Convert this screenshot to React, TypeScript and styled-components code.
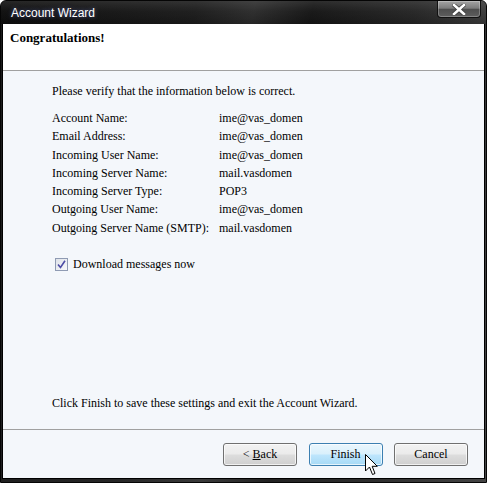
import React from "react";
import styled, { createGlobalStyle } from "styled-components";

const GlobalStyle = createGlobalStyle`
  html, body { margin: 0; padding: 0; background: #ffffff; }
  body { font-family: "Liberation Serif", "Times New Roman", serif; }
`;

const Window = styled.div`
  position: relative;
  width: 487px;
  height: 483px;
  box-sizing: border-box;
  border: 1px solid #050505;
  border-radius: 6px 6px 0 0;
  overflow: hidden;
  display: flex;
  flex-direction: column;
  background: linear-gradient(100deg, #1a1a1a 0%, #262626 35%, #3a3a3a 50%, #222 62%, #2e2e2e 80%, #444 100%);
`;

const TitleBar = styled.div`
  height: 23px;
  flex: none;
  display: flex;
  align-items: flex-start;
  padding-left: 10px;
  padding-right: 5px;
  background:
    linear-gradient(180deg, rgba(255,255,255,0.10) 0%, rgba(255,255,255,0.02) 45%, rgba(0,0,0,0.15) 100%),
    linear-gradient(100deg, #0e0e0e 0%, #1c1c1c 40%, #2c2c2c 52%, #161616 64%, #262626 85%, #3c3c3c 100%);
`;

const Title = styled.span`
  font-family: "Liberation Sans", Arial, sans-serif;
  font-size: 12px;
  line-height: 24px;
  color: #ffffff;
  text-shadow: 0 0 4px rgba(130, 150, 255, 0.55);
`;

const CloseButton = styled.div`
  margin-left: auto;
  width: 44px;
  height: 17px;
  box-sizing: border-box;
  border: 1px solid #111;
  border-top: none;
  border-radius: 0 0 4px 4px;
  display: flex;
  align-items: center;
  justify-content: center;
  background: linear-gradient(180deg, #a4a4a4 0%, #7c7c7c 45%, #4e4e4e 52%, #5e5e5e 100%);
  box-shadow: inset 0 0 0 1px rgba(255,255,255,0.25);
`;

const Frame = styled.div`
  flex: 1;
  display: flex;
  padding: 0 1px 3px 1px;
  min-height: 0;
`;

const Client = styled.div`
  flex: 1;
  display: flex;
  flex-direction: column;
  border: 1px solid #000;
  border-top: none;
  background: #f4f7fb;
`;

const Header = styled.div`
  height: 47px;
  flex: none;
  box-sizing: border-box;
  background: #ffffff;
  border-bottom: 1px solid #a0a0a0;
  padding: 6px 7px 0;
`;

const Heading = styled.div`
  font-size: 13px;
  line-height: 16px;
  font-weight: bold;
  color: #000;
`;

const Main = styled.div`
  flex: 1;
  display: flex;
  flex-direction: column;
  padding: 11px 20px 17px 49px;
  font-size: 12px;
  color: #000;
`;

const Text = styled.div`
  line-height: 18px;
`;

const InfoGrid = styled.div`
  margin-top: 9px;
  display: grid;
  grid-template-columns: 167px 1fr;
  line-height: 18.3px;
`;

const CheckRow = styled.label`
  margin-top: 18px;
  margin-left: 3px;
  display: flex;
  align-items: center;
  gap: 5px;
  line-height: 18px;
`;

const Box = styled.span`
  width: 13px;
  height: 13px;
  box-sizing: border-box;
  border: 1px solid #8f9bb3;
  background: linear-gradient(135deg, #dfe3ea 0%, #f7f8fa 100%);
  display: flex;
  align-items: center;
  justify-content: center;
`;

const FooterText = styled(Text)`
  margin-top: auto;
`;

const Footer = styled.div`
  height: 49px;
  flex: none;
  box-sizing: border-box;
  border-top: 1px solid #a0a0a0;
  display: flex;
  justify-content: flex-end;
  align-items: flex-start;
  gap: 11.5px;
  padding: 13px 16px 0 0;
`;

const Button = styled.button<{ $active?: boolean }>`
  width: 74px;
  height: 23px;
  padding: 0;
  border: 1px solid ${(p) => (p.$active ? "#3c7fb1" : "#707070")};
  border-radius: 3px;
  font-family: "Liberation Serif", "Times New Roman", serif;
  font-size: 12px;
  color: #000;
  box-shadow: inset 0 0 0 1px rgba(255,255,255,0.7);
  background: ${(p) =>
    p.$active
      ? "linear-gradient(180deg, #eaf6fd 0%, #d9f0fc 48%, #bee6fd 52%, #a7d9f5 100%)"
      : "linear-gradient(180deg, #f2f2f2 0%, #ebebeb 48%, #dddddd 52%, #cfcfcf 100%)"};
`;

const Underline = styled.span`
  text-decoration: underline;
`;

const Cursor = styled.svg`
  position: absolute;
  left: 364px;
  top: 453px;
  pointer-events: none;
`;

const rows: [string, string][] = [
  ["Account Name:", "ime@vas_domen"],
  ["Email Address:", "ime@vas_domen"],
  ["Incoming User Name:", "ime@vas_domen"],
  ["Incoming Server Name:", "mail.vasdomen"],
  ["Incoming Server Type:", "POP3"],
  ["Outgoing User Name:", "ime@vas_domen"],
  ["Outgoing Server Name (SMTP):", "mail.vasdomen"],
];

export default function App() {
  return (
    <>
      <GlobalStyle />
      <Window>
        <TitleBar>
          <Title>Account Wizard</Title>
          <CloseButton>
            <svg width="14" height="11" viewBox="0 0 14 11">
              <path d="M2 1 L12 10 M12 1 L2 10" stroke="#3a3a3a" strokeWidth="4" strokeLinecap="square" />
              <path d="M2 1 L12 10 M12 1 L2 10" stroke="#ffffff" strokeWidth="2.6" strokeLinecap="square" />
            </svg>
          </CloseButton>
        </TitleBar>
        <Frame>
          <Client>
            <Header>
              <Heading>Congratulations!</Heading>
            </Header>
            <Main>
              <Text>Please verify that the information below is correct.</Text>
              <InfoGrid>
                {rows.map(([k, v]) => (
                  <React.Fragment key={k}>
                    <span>{k}</span>
                    <span>{v}</span>
                  </React.Fragment>
                ))}
              </InfoGrid>
              <CheckRow>
                <Box>
                  <svg width="9" height="9" viewBox="0 0 9 9">
                    <path d="M1 4.5 L3.5 7.5 L8 0.8" fill="none" stroke="#4d4da6" strokeWidth="1.6" />
                  </svg>
                </Box>
                <span>Download messages now</span>
              </CheckRow>
              <FooterText>Click Finish to save these settings and exit the Account Wizard.</FooterText>
            </Main>
            <Footer>
              <Button>
                &lt; <Underline>B</Underline>ack
              </Button>
              <Button $active>Finish</Button>
              <Button>Cancel</Button>
            </Footer>
          </Client>
        </Frame>
        <Cursor width="13" height="22" viewBox="0 0 13 22">
          <path
            d="M0.5 0.5 L0.5 17 L4.5 13 L7.5 20.5 L10 19.5 L7.2 12.3 L12.3 12.3 Z"
            fill="#ffffff"
            stroke="#000000"
            strokeWidth="1"
            strokeLinejoin="miter"
          />
        </Cursor>
      </Window>
    </>
  );
}
